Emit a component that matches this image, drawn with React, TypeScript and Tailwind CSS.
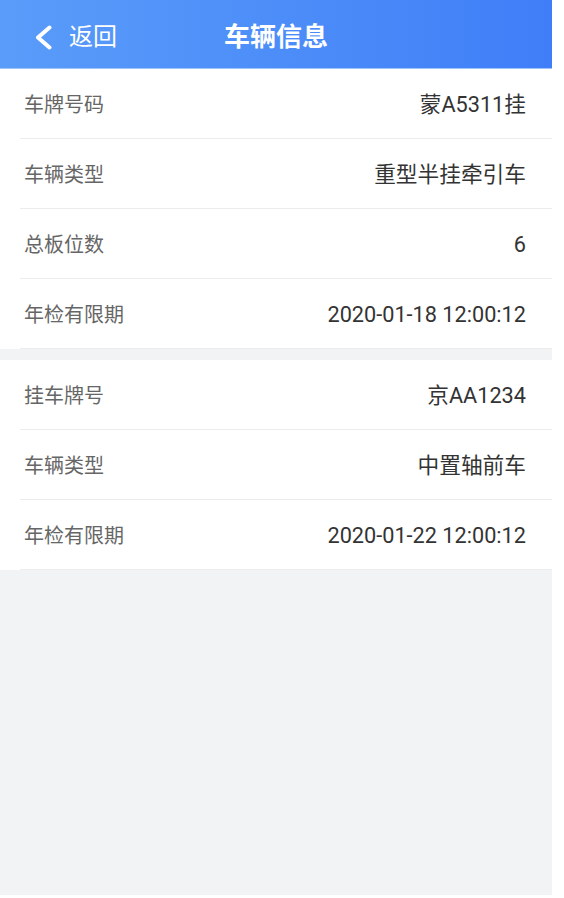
const truck = [
  { label: "车牌号码", value: "蒙A5311挂" },
  { label: "车辆类型", value: "重型半挂牵引车" },
  { label: "总板位数", value: "6" },
  { label: "年检有限期", value: "2020-01-18 12:00:12" },
];

const trailer = [
  { label: "挂车牌号", value: "京AA1234" },
  { label: "车辆类型", value: "中置轴前车" },
  { label: "年检有限期", value: "2020-01-22 12:00:12" },
];

function Row({ label, value }: { label: string; value: string }) {
  return (
    <div className="pl-[20px]">
      <div className="flex h-[70px] items-center justify-between border-b border-[#ececec] pl-[4px] pr-[26px] pt-[3px] leading-none">
        <span className="text-[20px] text-[#666666]">{label}</span>
        <span className="text-[21.7px] text-[#333333]">{value}</span>
      </div>
    </div>
  );
}

export default function App() {
  return (
    <div
      className="min-h-[898px] bg-white"
      style={{ fontFamily: "Roboto, 'Noto Sans CJK SC', sans-serif" }}
    >
      <div className="flex min-h-[895px] w-[552px] flex-col bg-[#f2f3f5]">
        <header className="flex h-[69px] items-center border-b border-[#9fc3fb] bg-gradient-to-r from-[#5a9cf9] to-[#3f7ef8] pt-[6px] leading-none text-white">
          <div className="flex w-[205px] items-center pl-[34px]">
            <svg width="19" height="25" viewBox="0 0 19 25" fill="none">
              <path
                d="M15.5 2.5 L4 12.5 L15.5 22.5"
                stroke="white"
                strokeWidth="4"
                strokeLinecap="round"
                strokeLinejoin="round"
              />
            </svg>
            <span className="ml-[16px] text-[24px]">返回</span>
          </div>
          <h1 className="ml-[19px] text-[26px] font-semibold">车辆信息</h1>
        </header>

        <section className="bg-white">
          {truck.map((r) => (
            <Row key={r.label} {...r} />
          ))}
        </section>

        <section className="mt-[11px] bg-white">
          {trailer.map((r) => (
            <Row key={r.label + r.value} {...r} />
          ))}
        </section>
      </div>
    </div>
  );
}
